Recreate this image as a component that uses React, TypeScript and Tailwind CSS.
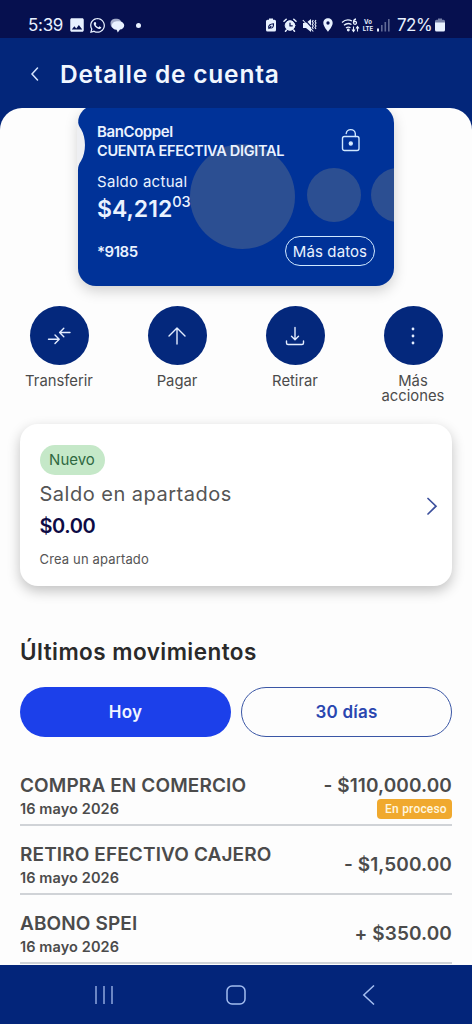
import type { ReactNode } from "react"
import { FaWhatsapp } from "react-icons/fa"
import { MdLocationOn, MdAlarm, MdImage } from "react-icons/md"

const actions = [
  { label: "Transferir", icon: <TransferIcon /> },
  { label: "Pagar", icon: <PayIcon /> },
  { label: "Retirar", icon: <WithdrawIcon /> },
  { label: "Más acciones", icon: <MoreIcon /> },
]

const movements = [
  { title: "COMPRA EN COMERCIO", date: "16 mayo 2026", amount: "- $110,000.00", pending: true },
  { title: "RETIRO EFECTIVO CAJERO", date: "16 mayo 2026", amount: "- $1,500.00", pending: false },
  { title: "ABONO SPEI", date: "16 mayo 2026", amount: "+ $350.00", pending: false },
]

function TransferIcon() {
  return (
    <svg width="24" height="24" viewBox="0 0 24 24" fill="none" stroke="#e3edff" strokeWidth="1.4" strokeLinecap="round" strokeLinejoin="round">
      <path d="M1.500 15.200H12M8 11l4.200 4.200L8 19.400M23 8.500H13M16.800 4.300 12.600 8.500l4.200 4.200" />
    </svg>
  )
}

function PayIcon() {
  return (
    <svg width="24" height="24" viewBox="0 0 24 24" fill="none" stroke="#e3edff" strokeWidth="1.4" strokeLinecap="round" strokeLinejoin="round">
      <path d="M12 20V4M4 12l8-8 8 8" />
    </svg>
  )
}

function WithdrawIcon() {
  return (
    <svg width="24" height="24" viewBox="0 0 24 24" fill="none" stroke="#e3edff" strokeWidth="1.4" strokeLinecap="round" strokeLinejoin="round">
      <path d="M12 3.500v12M8.500 12.200l3.500 3.500 3.500-3.500M3.500 17v2a1.500 1.500 0 0 0 1.500 1.500h14a1.500 1.500 0 0 0 1.500-1.500v-2" />
    </svg>
  )
}

function MoreIcon() {
  return (
    <svg width="24" height="24" viewBox="0 0 24 24" fill="#e3edff">
      <circle cx="12" cy="5" r="1.400" />
      <circle cx="12" cy="12" r="1.400" />
      <circle cx="12" cy="19" r="1.400" />
    </svg>
  )
}

function StatusBar() {
  return (
    <div className="flex h-[38px] items-center bg-[#06104f] pt-3 pr-[27px] pl-[28px] text-[#e8f1ff]">
      <span className="w-[35px] text-[17px] leading-none tracking-[-0.3px] whitespace-nowrap">5:39</span>
      <MdImage className="ml-[5px] size-[18px]" />
      <FaWhatsapp className="ml-[3px] size-[17px]" />
      <svg className="ml-[4px]" width="15" height="15" viewBox="0 0 15 15" fill="currentColor">
        <path opacity=".7" d="M6 .8c3 0 5.500 1.500 5.500 4.200S9 9.500 6 9.500 2.500 10 1.500 9C.8 8 .5 6.500.5 5 .5 2.300 3 .8 6 .8Z" />
        <path d="M8 3.200c3.400 0 6.200 1.500 6.200 4.200 0 2.200-1.900 3.700-4.200 4.200L7.800 14.500 6.600 11.800C3.800 11.400 1.800 9.800 1.800 7.400c0-2.700 2.800-4.200 6.200-4.200Z" />
      </svg>
      <span className="ml-[11px] size-[5px] rounded-full bg-current" />

      <div className="ml-auto flex items-center">
        <svg width="10" height="14" viewBox="0 0 10 14">
          <path fill="currentColor" d="M3 .5h4v1.300h1.500A1.500 1.500 0 0 1 10 3.300v8.700a1.500 1.500 0 0 1-1.500 1.500h-7A1.500 1.500 0 0 1 0 12V3.300a1.500 1.500 0 0 1 1.500-1.500H3Z" />
          <path d="M2.500 9.800c0-3 2-3.800 5-4 .2 3-1 4.800-3.500 4M2.500 10.800l2.800-2.800" fill="none" stroke="#06104f" strokeWidth="1.100" />
        </svg>
        {/* Alarm */}
        <svg className="ml-[7px]" width="14" height="14" viewBox="0 0 14 14" stroke="currentColor" strokeLinecap="round">
          <circle cx="7" cy="7.500" r="4.800" fill="currentColor" />
          <path d="M1 3.200 3.200 1.200M13 3.200 10.800 1.200M3.500 12 2.500 13.200M10.500 12l1 1.200" strokeWidth="1.500" />
          <path d="M7 5v2.800h2.300" fill="none" stroke="#06104f" strokeWidth="1.200" />
        </svg>
        <svg className="ml-[5px]" width="15" height="15" viewBox="0 0 15 15">
          <path fill="currentColor" d="M1 5h3l5-4v13l-5-4H1Z" />
          <path d="M2 .8l10 11" stroke="#06104f" strokeWidth="1.200" />
          <path d="M.8 2l10.500 11.500M11.300 2l-1 1.500 1 1.500-1 1.500 1 1.500-1 1.500 1 1.500M14 2l-1 1.500 1 1.500-1 1.500 1 1.500-1 1.500 1 1.500" fill="none" stroke="currentColor" strokeWidth="1.100" />
        </svg>
        <MdLocationOn className="ml-[3px] size-[16px]" />
        <svg className="ml-[5px]" width="19" height="15" viewBox="0 0 19 15" fill="none" stroke="currentColor" strokeWidth="1.300">
          <path d="M1 4.500C4 1.700 8 1.500 11 3M3 7.300c2.300-2 5-2.300 7.500-.8M5 10c1.300-1.100 3-1.200 4.500-.2" />
          <circle cx="7.300" cy="12" r=".8" fill="currentColor" />
          <circle cx="14" cy="4.800" r="1.500" />
          <path d="M15 1c-1.500.3-2.500 1.800-2.500 3.500" />
          <path d="M12.500 8.500v4.500M11 11.500l1.500 2 1.500-2M16.500 13.500V9M15 10.500l1.500-2 1.500 2" strokeWidth="1.100" />
        </svg>
        <span className="ml-[2px] flex w-[12px] flex-col items-center text-[6px] leading-[8px] font-bold">
          <span className="h-[7px]">Vo</span>
          <span className="h-[8px]">LTE</span>
        </span>
        <svg className="ml-[3px]" width="14" height="14" viewBox="0 0 14 14" fill="currentColor">
          <rect x="0" y="10.500" width="2" height="3" />
          <rect x="4" y="7" width="1.600" height="6.500" opacity=".4" />
          <rect x="7.500" y="4" width="1.600" height="9.500" opacity=".4" />
          <rect x="11" y="1" width="1.600" height="12.500" opacity=".4" />
        </svg>
        <span className="ml-[6px] w-[35px] text-[17px] leading-none tracking-[-0.5px] whitespace-nowrap">72%</span>
        <svg className="ml-[3px]" width="10" height="14" viewBox="0 0 10 14" fill="currentColor">
          <path opacity=".5" d="M3 .5h4v1.300h1.500A1.500 1.500 0 0 1 10 3.300V5H0V3.300a1.500 1.500 0 0 1 1.500-1.500H3Z" />
          <path d="M0 4.500h10V12a1.500 1.500 0 0 1-1.500 1.500h-7A1.500 1.500 0 0 1 0 12Z" />
        </svg>
      </div>
    </div>
  )
}

function AccountCard() {
  return (
    <div className="relative -mt-[3px] ml-[78px] h-[181px] w-[316px] shrink-0 rounded-[18px] bg-[#003298] text-[#eaf2ff] shadow-[0_5px_14px_rgba(0,0,0,0.18)]">
      {/* Decorative circles */}
      <div className="absolute inset-0 overflow-hidden rounded-[18px]">
        <div className="absolute top-[39px] left-[112px] size-[105px] rounded-full bg-[#2c4f92]" />
        <div className="absolute top-[63px] left-[229px] size-[54px] rounded-full bg-[#2c4f92]" />
        <div className="absolute top-[63px] left-[293px] size-[54px] rounded-full bg-[#2c4f92]" />
      </div>
      {/* Side notch */}
      <svg className="absolute top-[15px] -left-[1px]" width="9" height="50" viewBox="0 0 9 50">
        <path d="M0 0h1c0 4 1 6 3 9 5.300 9 5.300 23 0 32-2 3-3 5-3 9H0Z" fill="#eeeff2" />
      </svg>

      <div className="relative flex h-full flex-col pt-[18px] pl-[19px]">
        <span className="h-[17px] text-[15px] leading-[17px] font-semibold tracking-[-0.4px]">BanCoppel</span>
        <span className="mt-[2px] h-[18px] text-[14.500px] leading-[18px] font-semibold tracking-[-0.3px] whitespace-nowrap">CUENTA EFECTIVA DIGITAL</span>
        <span className="mt-[13px] h-[18px] text-[15px] leading-[18px] tracking-[0.3px]">Saldo actual</span>
        <div className="mt-[4px] flex h-[28px]">
          <span className="text-[23px] leading-[28px] font-semibold">$4,212</span>
          <span className="text-[14.500px] leading-[14px] font-medium">03</span>
        </div>
        <span className="mt-[20px] text-[15px] leading-[18px] font-semibold tracking-[-0.5px]">*9185</span>
      </div>

      {/* Open padlock */}
      <svg className="absolute top-[23px] right-[33px]" width="20" height="24" viewBox="0 0 20 24" fill="none" stroke="#cfe8ff" strokeWidth="1.400">
        <rect x="1.500" y="8.500" width="16.500" height="14" rx="2" />
        <path d="M5.200 5.500A4.600 4.600 0 0 1 14.300 5.500V8.500" strokeLinecap="round" />
        <circle cx="9.800" cy="15.500" r="1.500" fill="#e6f4ff" />
      </svg>
      <button className="absolute right-[19px] bottom-[20px] flex h-[30px] w-[90px] items-center justify-center rounded-full border-[1.500px] border-[#cfe8ff] text-[15px] leading-none tracking-[0.1px] whitespace-nowrap">
        Más datos
      </button>
    </div>
  )
}

function FilterButton({ active, children }: { active?: boolean; children: ReactNode }) {
  return (
    <button
      className={
        active
          ? "h-[50px] w-[211px] rounded-full bg-[#1c40ea] pt-[2px] text-[17px] font-semibold tracking-[0.2px] text-[#f1f5ff]"
          : "h-[50px] w-[211px] rounded-full border-[1.500px] border-[#3a56a5] pt-[2px] text-[17px] font-semibold tracking-[0.2px] text-[#2a46b0]"
      }
    >
      {children}
    </button>
  )
}

export default function App() {
  return (
    <div className="flex h-[1024px] w-[472px] flex-col overflow-hidden bg-[#03267a] font-['Inter',sans-serif]">
      <StatusBar />

      {/* Header */}
      <header className="flex h-[70px] items-center pt-[2px] pl-[30px]">
        <svg width="10" height="14" viewBox="0 0 10 14" fill="none" stroke="#d5e4ff" strokeWidth="1.500" strokeLinecap="round">
          <path d="M7.500 1 2 7l5.500 6" />
        </svg>
        <h1 className="ml-[20px] text-[24.500px] leading-none font-semibold tracking-[0.8px] text-[#f1f7ff]">Detalle de cuenta</h1>
      </header>

      <main className="flex h-[857px] flex-col overflow-hidden rounded-t-[22px] bg-[#fdfdfd]">
        <AccountCard />

        {/* Quick actions */}
        <div className="mt-[20px] grid h-[118px] shrink-0 grid-cols-4">
          {actions.map(({ label, icon }) => (
            <div key={label} className="flex flex-col items-center">
              <div className="flex size-[59px] items-center justify-center rounded-full bg-[#04287c]">{icon}</div>
              <span className="mt-[9px] w-[72px] text-center text-[14.800px] leading-[15px] text-[#4b4b4b]">{label}</span>
            </div>
          ))}
        </div>

        {/* Savings */}
        <section className="mx-5 flex h-[162px] shrink-0 items-center justify-between rounded-[18px] bg-white pr-[14px] pl-[19.500px] shadow-[0_5px_13px_rgba(0,0,0,0.24)]">
          <div className="flex h-full flex-col items-start pt-[21px]">
            <span className="flex h-[30px] w-[65px] items-center justify-center rounded-full bg-[#c5e8c8] text-[15px] text-[#2f6841]">Nuevo</span>
            <span className="mt-[6px] text-[20px] leading-[26px] tracking-[0.5px] text-[#555]">Saldo en apartados</span>
            <span className="mt-[6px] text-[20px] leading-[26px] font-semibold tracking-[-0.4px] text-[#0d0b45]">$0.00</span>
            <span className="mt-[12px] text-[13px] leading-[16px] tracking-[0.15px] text-[#555]">Crea un apartado</span>
          </div>
          <svg className="mt-[2px]" width="12" height="18" viewBox="0 0 12 18" fill="none" stroke="#3b4f9c" strokeWidth="1.700" strokeLinecap="round">
            <path d="M2 1.500 10 9.200 2 17" />
          </svg>
        </section>

        {/* Movements */}
        <h2 className="mt-[52px] ml-5 text-[22.500px] leading-[28px] font-semibold tracking-[0.45px] text-[#2a2a2a]">Últimos movimientos</h2>
        <div className="mx-5 mt-[21px] flex shrink-0 gap-[10px]">
          <FilterButton active>Hoy</FilterButton>
          <FilterButton>30 días</FilterButton>
        </div>

        <ul className="mx-5 mt-[20px] shrink-0">
          {movements.map((m) => (
            <li key={m.title} className="flex h-[69px] justify-between border-b-2 border-[#d0d3d7]">
              <div className="flex flex-col pt-[17px] whitespace-nowrap text-[#4b4b4b]">
                <span className="text-[19px] leading-[24px] font-semibold tracking-[0.12px]">{m.title}</span>
                <span className="text-[14.500px] leading-[22px] font-semibold tracking-[0.1px]">{m.date}</span>
              </div>
              <div className={m.pending ? "flex flex-col items-end pt-[17px]" : "flex flex-col items-end pt-[27px]"}>
                <span className="text-[19px] leading-[24px] font-semibold tracking-[0.1px] whitespace-nowrap text-[#4b4b4b]">{m.amount}</span>
                {m.pending && (
                  <span className="mt-[1px] flex h-[20px] w-[75px] items-center justify-center rounded-[4px] bg-[#f0a92e] pl-[3px] font-['Roboto',sans-serif] text-[12px] leading-none font-medium tracking-[0.2px] text-[#fff6df]">
                    En proceso
                  </span>
                )}
              </div>
            </li>
          ))}
        </ul>
      </main>

      {/* Android navigation */}
      <nav className="grid h-[59px] grid-cols-[208px_56px_208px] items-center bg-[#03257a]">
        <svg className="justify-self-center" width="20" height="20" viewBox="0 0 20 20" stroke="#8fa6dd" strokeWidth="1.500">
          <path d="M2 1v18M10 1v18M18 1v18" />
        </svg>
        <svg className="justify-self-center" width="20" height="20" viewBox="0 0 20 20" fill="none" stroke="#a3bdf0" strokeWidth="1.500">
          <rect x="1" y="1" width="18" height="18" rx="5" />
        </svg>
        <svg className="justify-self-center" width="20" height="20" viewBox="0 0 20 20" fill="none" stroke="#a3bdf0" strokeWidth="1.500">
          <path d="M16 .5 5.800 10 16 19.500" />
        </svg>
      </nav>
    </div>
  )
}
